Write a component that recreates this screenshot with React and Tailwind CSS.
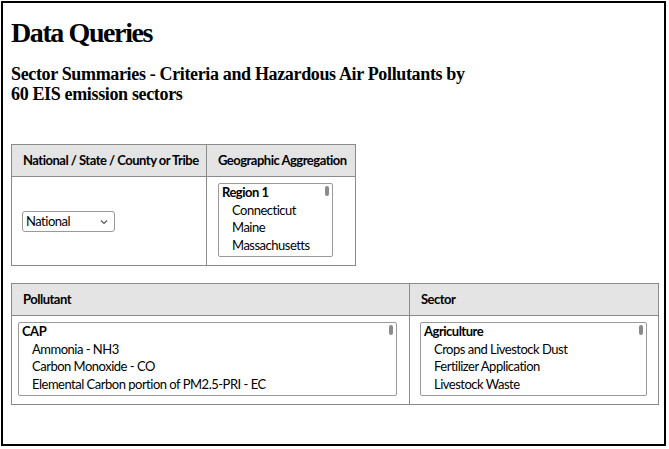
import React from "react";

const serif = { fontFamily: '"Liberation Serif", "DejaVu Serif", serif' };

function ListBox({ group, items, className }) {
  return (
    <div className={"relative border border-[#9a9a9a] rounded-[2px] bg-white overflow-hidden " + className}>
      <div className="absolute right-[3px] top-[2px] w-[4px] h-[10px] rounded-full bg-[#8a8a8a]" />
      <div className="pl-[3px] text-[13px] leading-[17.5px] text-black tracking-[-0.5px]">
        <div className="font-bold">{group}</div>
        {items.map((it) => (
          <div key={it} className="pl-[10px]">
            {it}
          </div>
        ))}
      </div>
    </div>
  );
}

export default function App() {
  return (
    <div
      className="w-[669px] h-[449px] bg-white p-[1px]"
      style={{ fontFamily: 'Lato, "Noto Sans", sans-serif' }}
    >
      <div className="w-[665px] h-[445px] border-2 border-black px-[8px]">
        <h1 className="text-[28px] font-bold leading-none mt-[16px] tracking-[-1.4px]" style={serif}>
          Data Queries
        </h1>
        <h2 className="text-[18px] font-bold leading-[20px] mt-[17px] tracking-[-0.35px]" style={serif}>
          Sector Summaries - Criteria and Hazardous Air Pollutants by
          <br />
          60 EIS emission sectors
        </h2>

        <div className="mt-[40px] w-[345px] border border-[#8a8a8a] text-[13px] tracking-[-0.5px] whitespace-nowrap">
          <div className="flex h-[32px] bg-[#e4e4e4] border-b border-[#8a8a8a] font-bold">
            <div className="w-[195px] border-r border-[#8a8a8a] flex items-center pl-[11px]">
              National / State / County or Tribe
            </div>
            <div className="flex-1 flex items-center pl-[11px]">Geographic Aggregation</div>
          </div>
          <div className="flex h-[88px]">
            <div className="w-[195px] border-r border-[#8a8a8a] flex items-center pl-[10px]">
              <div className="w-[93px] h-[21px] border border-[#9a9a9a] rounded-[3px] flex items-center justify-between px-[3px] mt-[1px]">
                <span>National</span>
                <svg width="8" height="6" viewBox="0 0 8 6" className="mr-[3px]">
                  <path d="M1 1.5 L4 4.5 L7 1.5" fill="none" stroke="#555" strokeWidth="1.1" />
                </svg>
              </div>
            </div>
            <div className="flex-1 pl-[11px] pt-[6px]">
              <ListBox
                group="Region 1"
                items={["Connecticut", "Maine", "Massachusetts"]}
                className="w-[115px] h-[74px]"
              />
            </div>
          </div>
        </div>

        <div className="mt-[17px] w-[648px] border border-[#8a8a8a] text-[13px] tracking-[-0.5px] whitespace-nowrap">
          <div className="flex h-[32px] bg-[#e4e4e4] border-b border-[#8a8a8a] font-bold">
            <div className="w-[398px] border-r border-[#8a8a8a] flex items-center pl-[11px]">Pollutant</div>
            <div className="flex-1 flex items-center pl-[11px]">Sector</div>
          </div>
          <div className="flex h-[88px]">
            <div className="w-[398px] border-r border-[#8a8a8a] pl-[6px] pt-[6px]">
              <ListBox
                group="CAP"
                items={["Ammonia - NH3", "Carbon Monoxide - CO", "Elemental Carbon portion of PM2.5-PRI - EC"]}
                className="w-[379px] h-[74px]"
              />
            </div>
            <div className="flex-1 pl-[10px] pt-[6px]">
              <ListBox
                group="Agriculture"
                items={["Crops and Livestock Dust", "Fertilizer Application", "Livestock Waste"]}
                className="w-[227px] h-[74px]"
              />
            </div>
          </div>
        </div>
      </div>
    </div>
  );
}
